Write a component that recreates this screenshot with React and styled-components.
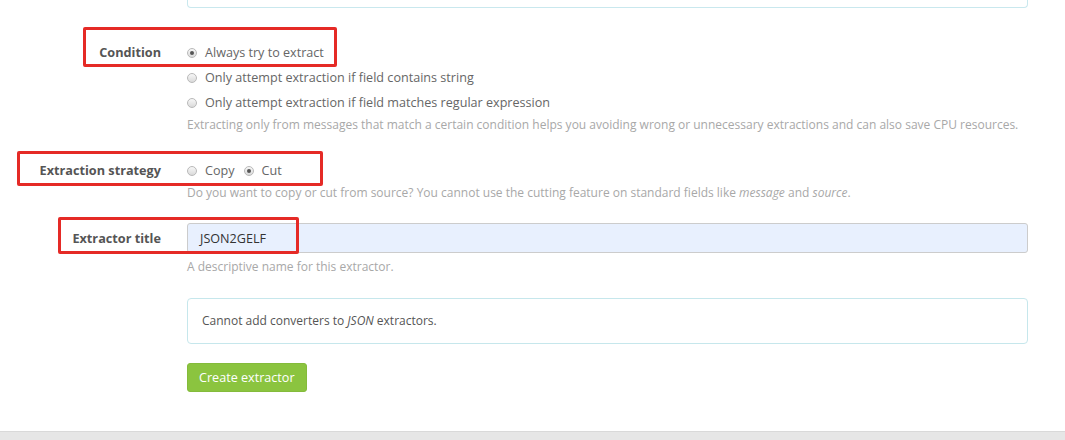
import styled, { createGlobalStyle } from "styled-components";

const GlobalStyle = createGlobalStyle`
  html, body {
    margin: 0;
    padding: 0;
    background: #fff;
  }
  body {
    font-family: "Open Sans", "Liberation Sans", sans-serif;
    font-size: 12.6px;
    color: #666;
  }
`;

const Page = styled.div`
  position: relative;
  width: 1065px;
  height: 440px;
  overflow: hidden;
  display: flex;
  flex-direction: column;
`;

const Form = styled.div`
  padding: 0 37px 0 0;
  flex: 1;
`;

const PreviewTail = styled.div`
  margin-left: 187px;
  height: 7px;
  border: 1px solid #c9e8ee;
  border-top: 0;
  border-radius: 0 0 4px 4px;
  margin-bottom: 32px;
`;

const Group = styled.div`
  display: grid;
  grid-template-columns: 161px 1fr;
  column-gap: 26px;
  margin-bottom: ${(p) => p.$mb || 0}px;
`;

const Label = styled.div`
  text-align: right;
  font-weight: 700;
  color: #555;
  font-size: 12.7px;
  line-height: ${(p) => p.$lh || 25}px;
`;

const Controls = styled.div`
  display: flex;
  flex-direction: column;
`;

const RadioRow = styled.div`
  display: flex;
  align-items: center;
  gap: 9px;
  height: 25px;
`;

const RadioItem = styled.label`
  display: flex;
  align-items: center;
  gap: 8px;
  color: #666;
  line-height: 25px;
`;

const Radio = styled.span`
  width: 10px;
  height: 10px;
  box-sizing: border-box;
  border-radius: 50%;
  border: 1px solid #b9b9b9;
  background: linear-gradient(#f7f7f7, #dadada);
  display: flex;
  align-items: center;
  justify-content: center;
  &::after {
    content: "";
    width: 4px;
    height: 4px;
    border-radius: 50%;
    background: ${(p) => (p.$checked ? "#555" : "transparent")};
  }
`;

const Help = styled.div`
  color: #a8a8a8;
  font-size: 12px;
  line-height: 20px;
  white-space: nowrap;
  margin-top: ${(p) => p.$mt || 0}px;
  em {
    font-style: italic;
  }
`;

const Input = styled.div`
  height: 30px;
  box-sizing: border-box;
  border: 1px solid #ccc;
  border-radius: 3px;
  background: #e8f0fe;
  color: #333;
  padding: 0 12px;
  display: flex;
  align-items: center;
`;

const InfoBox = styled.div`
  border: 1px solid #c6e7ec;
  border-radius: 4px;
  padding: 12px 14px;
  font-size: 12px;
  line-height: 20px;
  color: #555;
  margin-bottom: 19px;
`;

const Button = styled.button`
  font-family: inherit;
  font-size: 12.6px;
  color: #fff;
  background: #8bc43f;
  border: 1px solid #84bb3b;
  border-radius: 3px;
  height: 29px;
  padding: 0 11px;
  cursor: pointer;
`;

const Footer = styled.div`
  height: 8px;
  background: #e6e6e6;
  border-top: 1px solid #d9d9d9;
`;

const Mark = styled.div`
  position: absolute;
  left: ${(p) => p.$x}px;
  top: ${(p) => p.$y}px;
  width: ${(p) => p.$w}px;
  height: ${(p) => p.$h}px;
  box-sizing: border-box;
  border: 3px solid #e52a26;
  border-radius: 2px;
  pointer-events: none;
`;

const Option = ({ checked, children }) => (
  <RadioItem>
    <Radio $checked={checked} />
    {children}
  </RadioItem>
);

export default function App() {
  return (
    <>
      <GlobalStyle />
      <Page>
        <Form>
          <PreviewTail />

          <Group $mb={23}>
            <Label>Condition</Label>
            <Controls>
              <RadioRow>
                <Option checked>Always try to extract</Option>
              </RadioRow>
              <RadioRow>
                <Option>Only attempt extraction if field contains string</Option>
              </RadioRow>
              <RadioRow>
                <Option>Only attempt extraction if field matches regular expression</Option>
              </RadioRow>
              <Help>
                Extracting only from messages that match a certain condition helps you avoiding wrong or
                unnecessary extractions and can also save CPU resources.
              </Help>
            </Controls>
          </Group>

          <Group $mb={20}>
            <Label>Extraction strategy</Label>
            <Controls>
              <RadioRow>
                <Option>Copy</Option>
                <Option checked>Cut</Option>
              </RadioRow>
              <Help>
                Do you want to copy or cut from source? You cannot use the cutting feature on standard
                fields like <em>message</em> and <em>source</em>.
              </Help>
            </Controls>
          </Group>

          <Group $mb={21}>
            <Label $lh={30}>Extractor title</Label>
            <Controls>
              <Input>JSON2GELF</Input>
              <Help $mt={4}>A descriptive name for this extractor.</Help>
            </Controls>
          </Group>

          <Group>
            <div />
            <Controls>
              <InfoBox>
                Cannot add converters to <em>JSON</em> extractors.
              </InfoBox>
              <div>
                <Button>Create extractor</Button>
              </div>
            </Controls>
          </Group>
        </Form>
        <Footer />

        <Mark $x={83} $y={27} $w={254} $h={40} />
        <Mark $x={17} $y={151} $w={306} $h={35} />
        <Mark $x={58} $y={217} $w={241} $h={37} />
      </Page>
    </>
  );
}
